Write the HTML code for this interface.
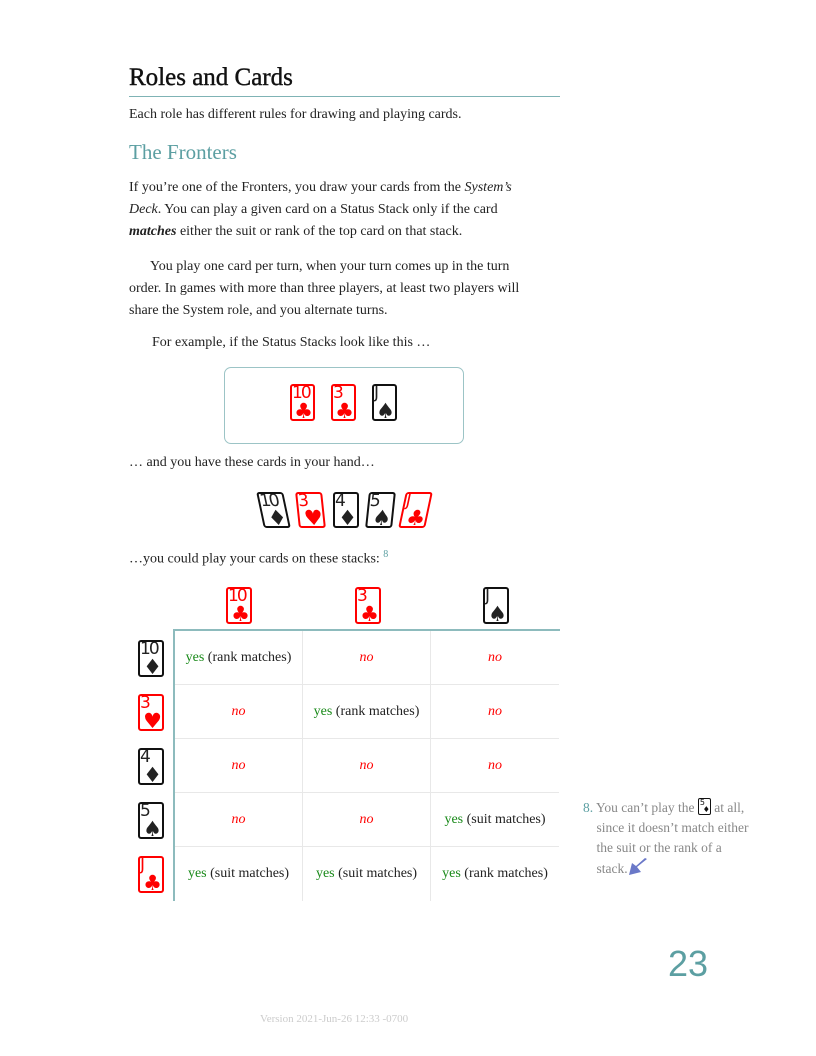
<!DOCTYPE html>
<html><head><meta charset="utf-8"><style>
body{margin:0;background:#fff;}
#p{position:relative;width:816px;height:1056px;font-family:"Liberation Serif",serif;color:#222;font-size:14px;}
.a{position:absolute;white-space:nowrap;}
.c{position:absolute;box-sizing:border-box;border:2px solid #111;border-radius:3px;background:#fff;font-family:"DejaVu Sans",sans-serif;overflow:hidden}
.c.r{border-color:#f00;color:#f00}
.c .k{position:absolute;left:0px;top:-2px;font-size:17px;letter-spacing:-2px;line-height:18px}
.c .s{position:absolute;right:0px;bottom:-2px;font-size:21px;line-height:20px}
.cell{position:absolute;width:128px;height:54px;display:flex;align-items:center;justify-content:center;font-size:14px;border-right:1px solid #e8e8e8;border-bottom:1px solid #e8e8e8;box-sizing:border-box}
.y{color:#1a8a1a}.n{color:#f00;font-style:italic}
</style></head><body><div id="p">
<div class="a" style="left:129px;top:64px;font-size:25px;color:#111;-webkit-text-stroke:0.4px #111">Roles and Cards</div>
<div class="a" style="left:129px;top:96px;width:431px;border-top:1.5px solid #7fb3b5"></div>
<div class="a" style="left:129px;top:107px">Each role has different rules for drawing and playing cards.</div>
<div class="a" style="left:129px;top:140px;font-size:21px;color:#5c9fa2">The Fronters</div>
<div class="a" style="left:129px;top:177px;line-height:22px">If you’re one of the Fronters, you draw your cards from the <i>System’s</i><br><i>Deck</i>. You can play a given card on a Status Stack only if the card<br><b><i>matches</i></b> either the suit or rank of the top card on that stack.</div>
<div class="a" style="left:129px;top:256px;line-height:22px">&nbsp;&nbsp;&nbsp;&nbsp;&nbsp;&nbsp;You play one card per turn, when your turn comes up in the turn<br>order. In games with more than three players, at least two players will<br>share the System role, and you alternate turns.</div>
<div class="a" style="left:152px;top:335px">For example, if the Status Stacks look like this …</div>
<div class="a" style="left:224px;top:367px;width:238px;height:75px;border:1px solid #9cc4c6;border-radius:7px"></div>
<div class="c r" style="left:290px;top:384px;width:25px;height:37px"><span class="k">10</span><span class="s">♣</span></div>
<div class="c r" style="left:331px;top:384px;width:25px;height:37px"><span class="k">3</span><span class="s">♣</span></div>
<div class="c" style="left:372px;top:384px;width:25px;height:37px"><span class="k">J</span><span class="s">♠</span></div>
<div class="a" style="left:129px;top:455px">… and you have these cards in your hand…</div>
<div class="c" style="left:260px;top:492px;width:27px;height:36px;transform:skewX(12deg)"><span class="k">10</span><span class="s">♦</span></div>
<div class="c r" style="left:297px;top:492px;width:27px;height:36px;transform:skewX(6deg)"><span class="k">3</span><span class="s">♥</span></div>
<div class="c" style="left:333px;top:492px;width:26px;height:36px"><span class="k">4</span><span class="s">♦</span></div>
<div class="c" style="left:367px;top:492px;width:27px;height:36px;transform:skewX(-6deg)"><span class="k">5</span><span class="s">♠</span></div>
<div class="c r" style="left:402px;top:492px;width:27px;height:36px;transform:skewX(-12deg)"><span class="k">J</span><span class="s">♣</span></div>
<div class="a" style="left:129px;top:549px">…you could play your cards on these stacks: <sup style="color:#5c9fa2;font-size:10px">8</sup></div>
<div class="c r" style="left:226px;top:587px;width:26px;height:37px"><span class="k">10</span><span class="s">♣</span></div>
<div class="c r" style="left:355px;top:587px;width:26px;height:37px"><span class="k">3</span><span class="s">♣</span></div>
<div class="c" style="left:483px;top:587px;width:26px;height:37px"><span class="k">J</span><span class="s">♠</span></div>
<div class="a" style="left:173px;top:629px;width:387px;border-top:2px solid #8dbbbd"></div>
<div class="a" style="left:173px;top:629px;height:272px;border-left:2px solid #8dbbbd"></div>
<div class="c" style="left:138px;top:640px;width:26px;height:37px"><span class="k">10</span><span class="s">♦</span></div>
<div class="c r" style="left:138px;top:694px;width:26px;height:37px"><span class="k">3</span><span class="s">♥</span></div>
<div class="c" style="left:138px;top:748px;width:26px;height:37px"><span class="k">4</span><span class="s">♦</span></div>
<div class="c" style="left:138px;top:802px;width:26px;height:37px"><span class="k">5</span><span class="s">♠</span></div>
<div class="c r" style="left:138px;top:856px;width:26px;height:37px"><span class="k">J</span><span class="s">♣</span></div>
<div class="cell" style="left:175px;top:631px"><span class="y">yes</span>&nbsp;(rank matches)</div>
<div class="cell" style="left:303px;top:631px"><span class="n">no</span></div>
<div class="cell" style="left:431px;top:631px;border-right:0"><span class="n">no</span></div>
<div class="cell" style="left:175px;top:685px"><span class="n">no</span></div>
<div class="cell" style="left:303px;top:685px"><span class="y">yes</span>&nbsp;(rank matches)</div>
<div class="cell" style="left:431px;top:685px;border-right:0"><span class="n">no</span></div>
<div class="cell" style="left:175px;top:739px"><span class="n">no</span></div>
<div class="cell" style="left:303px;top:739px"><span class="n">no</span></div>
<div class="cell" style="left:431px;top:739px;border-right:0"><span class="n">no</span></div>
<div class="cell" style="left:175px;top:793px"><span class="n">no</span></div>
<div class="cell" style="left:303px;top:793px"><span class="n">no</span></div>
<div class="cell" style="left:431px;top:793px;border-right:0"><span class="y">yes</span>&nbsp;(suit matches)</div>
<div class="cell" style="left:175px;top:847px;border-bottom:0"><span class="y">yes</span>&nbsp;(suit matches)</div>
<div class="cell" style="left:303px;top:847px;border-bottom:0"><span class="y">yes</span>&nbsp;(suit matches)</div>
<div class="cell" style="left:431px;top:847px;border:0"><span class="y">yes</span>&nbsp;(rank matches)</div>
<div class="a" style="left:583px;top:798px;line-height:20px;color:#888;font-size:13.5px"><span style="color:#5c9fa2">8.</span> You can’t play the <span style="display:inline-block;width:11px;height:15px;border:1.5px solid #111;border-radius:2px;vertical-align:-3px;position:relative;font-size:8px;color:#111;line-height:8px;font-family:'DejaVu Sans'"><span style="position:absolute;left:1px;top:0">5</span><span style="position:absolute;right:0;bottom:0">♦</span></span> at all,<br>&nbsp;&nbsp;&nbsp;&nbsp;since it doesn’t match either<br>&nbsp;&nbsp;&nbsp;&nbsp;the suit or the rank of a<br>&nbsp;&nbsp;&nbsp;&nbsp;stack.<svg width="20" height="18" viewBox="0 0 20 18" style="vertical-align:-3px"><path d="M19 1 L9 9 L13 14 L1 17 L4 5 L8 8 L17 0Z" fill="#6a78c8"/></svg></div>
<div class="a" style="left:668px;top:944px;font-size:36px;line-height:40px;color:#5c9fa2;font-family:'Liberation Sans',sans-serif">23</div>
<div class="a" style="left:260px;top:1013px;font-size:11px;color:#ccc">Version 2021-Jun-26 12:33 -0700</div>
</div></body></html>
